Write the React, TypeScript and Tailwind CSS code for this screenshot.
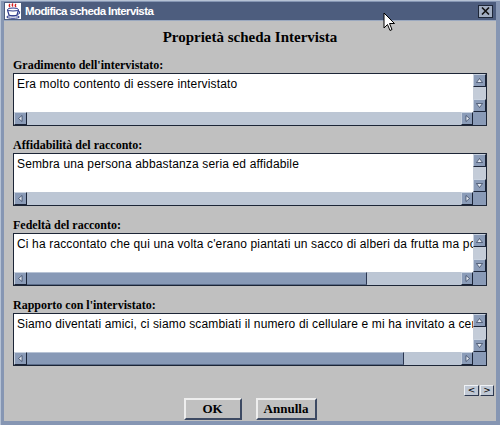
import React from 'react';

type Dir = 'up' | 'down' | 'left' | 'right';

const arrowPoints: Record<Dir, string> = {
  up: '0.5,5.5 3.5,1.5 6.5,5.5',
  down: '0.5,1.5 3.5,5.5 6.5,1.5',
  left: '5,0.5 1.5,3.5 5,6.5',
  right: '2,0.5 5.5,3.5 2,6.5',
};

const ScrollButton: React.FC<{ dir: Dir; className?: string }> = ({ dir, className = '' }) => (
  <div
    className={`flex items-center justify-center bg-[#8b9cb8] border border-t-[#c9d2df] border-l-[#c9d2df] border-r-[#1b2437] border-b-[#1b2437] ${className}`}
  >
    <svg width="7" height="7" viewBox="0 0 7 7">
      <polygon points={arrowPoints[dir]} fill="#e4e9f1" stroke="#2f3c57" strokeWidth="0.7" />
    </svg>
  </div>
);

interface FieldProps {
  label: string;
  text: string;
  thumb?: number;
  first?: boolean;
}

const Field: React.FC<FieldProps> = ({ label, text, thumb, first }) => (
  <div className={`flex flex-col ${first ? 'mt-[10px]' : 'mt-[11px]'}`}>
    <div className="h-[16px] leading-[16px] text-[12px] font-bold text-black font-['Liberation_Serif',serif]">
      {label}
    </div>
    <div className="w-[474px] h-[53px] border border-[#1c2536] flex flex-col">
      <div className="flex flex-1 min-h-0">
        <div className="flex-1 bg-white overflow-hidden whitespace-nowrap pl-[3px] pt-[2px] text-[12px] leading-[16px] tracking-[0.15px] text-black font-['Liberation_Sans',Arial,sans-serif]">
          {text}
        </div>
        <div className="w-[13px] bg-[#c4ccd8] flex flex-col justify-between">
          <ScrollButton dir="up" className="h-[13px]" />
          <ScrollButton dir="down" className="h-[13px]" />
        </div>
      </div>
      <div className="h-[13px] flex">
        <div className="flex-1 flex bg-[#bcc6d4]">
          <ScrollButton dir="left" className="w-[13px]" />
          <div className="flex-1 flex">
            {thumb ? (
              <div
                className="h-full bg-[#8799b6] border-t border-t-[#b7c3d5] border-r border-r-[#2b3650] border-b border-b-[#5a6b88]"
                style={{ width: thumb }}
              />
            ) : null}
          </div>
          <ScrollButton dir="right" className="w-[12px]" />
        </div>
        <div className="w-[13px] bg-[#8a9bb7]" />
      </div>
    </div>
  </div>
);

const PushButton: React.FC<{ children: React.ReactNode; className?: string }> = ({ children, className = '' }) => (
  <div
    className={`flex items-center justify-center bg-[#c0c0c0] border-2 border-t-[#eeeeee] border-l-[#eeeeee] border-r-[#3d4a63] border-b-[#3d4a63] text-black font-bold font-['Liberation_Serif',serif] ${className}`}
  >
    {children}
  </div>
);

export default function App() {
  return (
    <div className="relative w-[500px] h-[425px] bg-[#8696b3] border-t border-l border-[#b6c2d4] pt-px pl-[3px] pr-[4px] pb-[4px] flex flex-col overflow-hidden">
      {/* title bar */}
      <div className="h-[18px] bg-[#4d5d7e] flex items-center shrink-0 pl-px pr-[3px]">
        <svg width="16" height="16" viewBox="0 0 16 16" className="mr-[4px]">
          <rect x="0" y="0" width="16" height="16" fill="#ffffff" />
          <path d="M5 1 q-1.5 1.5 0 3 M8 0.5 q-1.5 1.5 0 3 M11 1 q-1.5 1.5 0 3" stroke="#d42020" strokeWidth="1.3" fill="none" />
          <ellipse cx="8" cy="6.5" rx="5.5" ry="1.5" fill="none" stroke="#2d3a8c" strokeWidth="1" />
          <path d="M2.5 7 L4 12 Q8 14 12 12 L13.5 7" fill="none" stroke="#2d3a8c" strokeWidth="1.2" />
          <path d="M13 8 q2.5 0 1.5 2.5 l-2 1" fill="none" stroke="#2d3a8c" strokeWidth="1" />
          <ellipse cx="8" cy="14" rx="6.5" ry="1.3" fill="none" stroke="#2d3a8c" strokeWidth="1" />
        </svg>
        <span className="text-white font-bold text-[11.5px] leading-[16px] tracking-[-0.6px] font-['Liberation_Sans',Arial,sans-serif]">
          Modifica scheda Intervista
        </span>
        <div className="ml-auto w-[15px] h-[13px] bg-[#a2aec2] border border-[#1e2738] flex items-center justify-center">
          <svg width="9" height="8" viewBox="0 0 9 8">
            <path d="M1 0.5 L8 7.5 M8 0.5 L1 7.5" stroke="#111" strokeWidth="1.6" />
          </svg>
        </div>
      </div>

      {/* content */}
      <div className="flex-1 bg-[#c0c0c0] border-t border-[#9aa8bf] flex flex-col pl-[9px] pr-[9px] pt-[6px]">
        <div className="h-[20px] leading-[20px] text-center text-[15px] font-bold text-black font-['Liberation_Serif',serif]">
          Proprietà scheda Intervista
        </div>
        <Field first label="Gradimento dell'intervistato:" text="Era molto contento di essere intervistato" />
        <Field label="Affidabilità del racconto:" text="Sembra una persona abbastanza seria ed affidabile" />
        <Field
          label="Fedeltà del racconto:"
          text="Ci ha raccontato che qui una volta c'erano piantati un sacco di alberi da frutta ma poi"
          thumb={340}
        />
        <Field
          label="Rapporto con l'intervistato:"
          text="Siamo diventati amici, ci siamo scambiati il numero di cellulare e mi ha invitato a cena"
          thumb={377}
        />

        <div className="mt-[19px] flex justify-end gap-px -mr-[8px] pr-px">
          <div className="w-[15px] h-[11px] bg-[#c0c8d4] border border-t-[#eef1f5] border-l-[#eef1f5] border-r-[#2d3850] border-b-[#2d3850] flex items-center justify-center text-[9px] leading-none font-['DejaVu_Sans',sans-serif] text-black">
            &lt;
          </div>
          <div className="w-[14px] h-[11px] bg-[#c0c8d4] border border-t-[#eef1f5] border-l-[#eef1f5] border-r-[#2d3850] border-b-[#2d3850] flex items-center justify-center text-[9px] leading-none font-['DejaVu_Sans',sans-serif] text-black">
            &gt;
          </div>
        </div>

        <div className="mt-[2px] flex justify-center gap-[14px]">
          <PushButton className="w-[58px] h-[22px] text-[13px]">OK</PushButton>
          <PushButton className="w-[61px] h-[22px] text-[13px]">Annulla</PushButton>
        </div>
      </div>

      {/* mouse pointer */}
      <svg className="absolute left-[382px] top-[11px]" width="13" height="21" viewBox="0 0 13 21">
        <path d="M1 1 L1 16 L4.5 12.5 L7 18.5 L9 17.5 L6.5 11.5 L11.5 11.5 Z" fill="#ffffff" stroke="#000000" strokeWidth="1" />
      </svg>
    </div>
  );
}
